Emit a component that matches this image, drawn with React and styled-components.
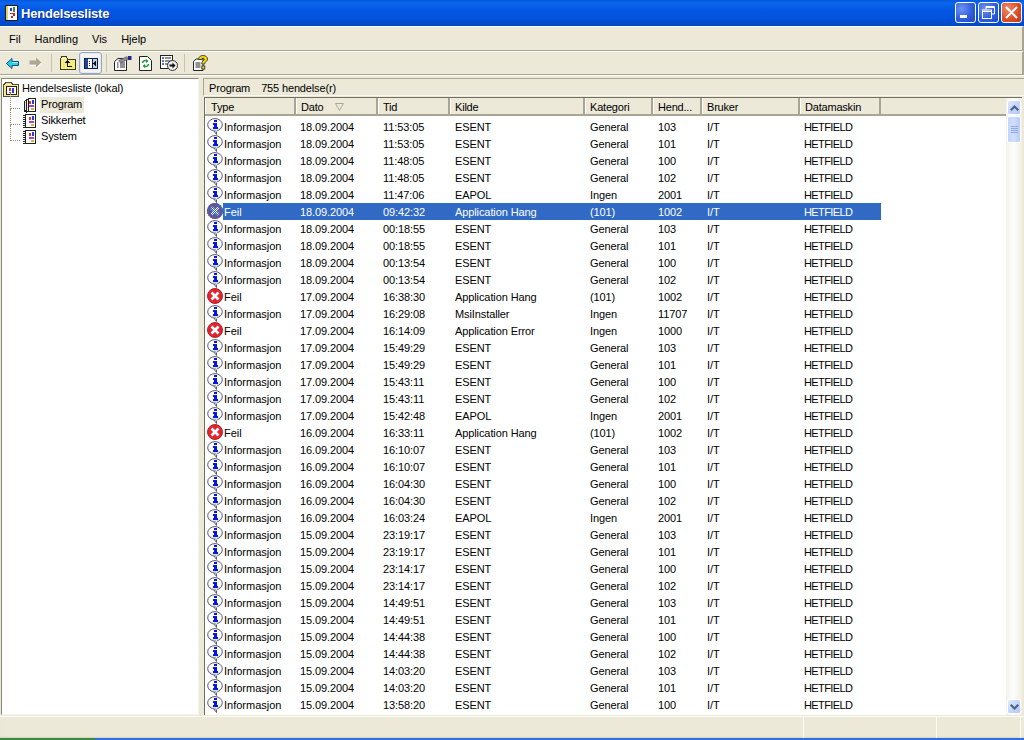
import React from 'react';
import styled, { createGlobalStyle } from 'styled-components';

const GlobalStyle = createGlobalStyle`
    html, body {
        margin: 0;
        padding: 0;
        background: #ECE9D8;
    }
    * {
        box-sizing: border-box;
    }
`;

const COLUMNS = '91px 82px 72px 135px 68px 49px 98px 81px';

const headers = ['Type', 'Dato', 'Tid', 'Kilde', 'Kategori', 'Hend...', 'Bruker', 'Datamaskin'];

const I = 'Informasjon';
const F = 'Feil';

// type, dato, tid, kilde, kategori, hendelse
const events = [
    [I, '18.09.2004', '11:53:05', 'ESENT', 'General', '103'],
    [I, '18.09.2004', '11:53:05', 'ESENT', 'General', '101'],
    [I, '18.09.2004', '11:48:05', 'ESENT', 'General', '100'],
    [I, '18.09.2004', '11:48:05', 'ESENT', 'General', '102'],
    [I, '18.09.2004', '11:47:06', 'EAPOL', 'Ingen', '2001'],
    [F, '18.09.2004', '09:42:32', 'Application Hang', '(101)', '1002'],
    [I, '18.09.2004', '00:18:55', 'ESENT', 'General', '103'],
    [I, '18.09.2004', '00:18:55', 'ESENT', 'General', '101'],
    [I, '18.09.2004', '00:13:54', 'ESENT', 'General', '100'],
    [I, '18.09.2004', '00:13:54', 'ESENT', 'General', '102'],
    [F, '17.09.2004', '16:38:30', 'Application Hang', '(101)', '1002'],
    [I, '17.09.2004', '16:29:08', 'MsiInstaller', 'Ingen', '11707'],
    [F, '17.09.2004', '16:14:09', 'Application Error', 'Ingen', '1000'],
    [I, '17.09.2004', '15:49:29', 'ESENT', 'General', '103'],
    [I, '17.09.2004', '15:49:29', 'ESENT', 'General', '101'],
    [I, '17.09.2004', '15:43:11', 'ESENT', 'General', '100'],
    [I, '17.09.2004', '15:43:11', 'ESENT', 'General', '102'],
    [I, '17.09.2004', '15:42:48', 'EAPOL', 'Ingen', '2001'],
    [F, '16.09.2004', '16:33:11', 'Application Hang', '(101)', '1002'],
    [I, '16.09.2004', '16:10:07', 'ESENT', 'General', '103'],
    [I, '16.09.2004', '16:10:07', 'ESENT', 'General', '101'],
    [I, '16.09.2004', '16:04:30', 'ESENT', 'General', '100'],
    [I, '16.09.2004', '16:04:30', 'ESENT', 'General', '102'],
    [I, '16.09.2004', '16:03:24', 'EAPOL', 'Ingen', '2001'],
    [I, '15.09.2004', '23:19:17', 'ESENT', 'General', '103'],
    [I, '15.09.2004', '23:19:17', 'ESENT', 'General', '101'],
    [I, '15.09.2004', '23:14:17', 'ESENT', 'General', '100'],
    [I, '15.09.2004', '23:14:17', 'ESENT', 'General', '102'],
    [I, '15.09.2004', '14:49:51', 'ESENT', 'General', '103'],
    [I, '15.09.2004', '14:49:51', 'ESENT', 'General', '101'],
    [I, '15.09.2004', '14:44:38', 'ESENT', 'General', '100'],
    [I, '15.09.2004', '14:44:38', 'ESENT', 'General', '102'],
    [I, '15.09.2004', '14:03:20', 'ESENT', 'General', '103'],
    [I, '15.09.2004', '14:03:20', 'ESENT', 'General', '101'],
    [I, '15.09.2004', '13:58:20', 'ESENT', 'General', '100'],
];

function InfoIcon() {
    return (
        <svg width="16" height="17" viewBox="0 0 16 17">
            <path d="M6.500 12.500L9.500 16.500V12z" fill="#fff" stroke="#555a70" />
            <ellipse cx="8" cy="6.800" rx="7.300" ry="6.200" fill="#fff" stroke="#555a70" />
            <path d="M9.500 12v1.500" stroke="#fff" />
            <path d="M2.500 9.500C4 11.500 6 12 8 12s4-.5 5.500-2.500" fill="none" stroke="#c9ccdb" />
            <g shapeRendering="crispEdges">
                <rect x="7" y="2" width="3" height="2" fill="#0618e0" />
                <path d="M6 5h4v4h1v2H6V9h1V6.500H6z" fill="#0618e0" />
            </g>
        </svg>
    );
}

function ErrorIcon({ selected }) {
    return (
        <svg width="16" height="16" viewBox="0 0 16 16">
            <defs>
                <pattern id="dither" width="2" height="2" patternUnits="userSpaceOnUse">
                    <rect width="2" height="1" fill="#316AC5" />
                    <rect x="1" y="1" width="1" height="1" fill="#316AC5" />
                </pattern>
                <pattern id="ditherCross" width="2" height="2" patternUnits="userSpaceOnUse">
                    <rect width="2" height="2" fill="#316AC5" />
                    <rect width="1" height="1" fill="#fff" />
                    <rect x="1" y="1" width="1" height="1" fill="#fff" />
                </pattern>
            </defs>
            <circle cx="8" cy="8" r="7.500" fill="#e3232d" stroke="#b0242c" />
            {selected && <circle cx="8" cy="8" r="8" fill="url(#dither)" />}
            <path d="M4.500 4.500l7 7M11.500 4.500l-7 7" stroke={selected ? 'url(#ditherCross)' : '#fff'} strokeWidth="2.600" />
        </svg>
    );
}

// notatblokk med spiral, brukt for loggene i treet
function LogIcon({ open }) {
    return (
        <svg width="14" height="16" viewBox="0 0 14 16" shapeRendering="crispEdges">
            {open ? (
                <>
                    <path d="M3.500 2.500L1 5v10l3-2" fill="#e4e4e4" stroke="#222" />
                    <path d="M5.500 1.500L3.500 3v12l2-1" fill="#f4f4f4" stroke="#222" />
                </>
            ) : (
                <path d="M0 2h2v1H0zM0 4h2v1H0zM0 6h2v1H0zM0 8h2v1H0zM0 10h2v1H0zM0 12h2v1H0zM0 14h2v1H0z" fill="#222" />
            )}
            <rect x={open ? 5.500 : 2.500} y="1.500" width={open ? 7 : 10} height="13" fill="#fff" stroke="#222" />
            <rect x="6" y="4" width="2" height="3" fill="#d9342f" />
            <rect x="9" y="3" width="2" height="4" fill="#2c3bd0" />
            <rect x="6" y="8" width="5" height="2" fill="#b13fb5" />
            <rect x="8" y="11" width="3" height="2" fill="#d7b52c" />
        </svg>
    );
}

function TitleDoc() {
    return (
        <svg width="13" height="16" viewBox="0 0 13 16" shapeRendering="crispEdges">
            <rect x=".5" y=".5" width="12" height="15" fill="#fff" stroke="#1c1c1c" />
            <rect x="1" y="1" width="2" height="14" fill="#e7cf6b" />
            <rect x="5" y="3" width="2" height="3" fill="#2c3bd0" />
            <rect x="8" y="2" width="2" height="5" fill="#3d8f3d" />
            <path d="M5 8h5v3H8v2H6v-2h2V9H5z" fill="#c62c2c" />
        </svg>
    );
}

function RootIcon() {
    return (
        <svg width="16" height="16" viewBox="0 0 16 16" shapeRendering="crispEdges">
            <path d="M.5 3.500h1l1-2h6l1 2h6v12H.5z" fill="#f6e98c" stroke="#4f4f40" />
            <rect x="3.500" y="5.500" width="10" height="8" fill="#fff" stroke="#222" />
            <rect x="6" y="7" width="2" height="3" fill="#d9342f" />
            <rect x="9" y="7" width="2" height="5" fill="#2c3bd0" />
            <rect x="6" y="11" width="2" height="1" fill="#b13fb5" />
        </svg>
    );
}

function BackIcon() {
    return (
        <svg width="13" height="11" viewBox="0 0 13 11">
            <path d="M6 .5v3h6.500v4H6v3L.5 5.500z" fill="#25d3e8" stroke="#0b4f7c" />
            <path d="M6 4.500h6" stroke="#a9f3fa" />
        </svg>
    );
}

function ForwardIcon() {
    return (
        <svg width="13" height="12" viewBox="0 0 13 12">
            <path d="M7 .5v3H.500v4H7v3l5.500-5z" fill="#a9a796" />
            <path d="M1 8.500h6M7.500 11l5-5" stroke="#fff" />
        </svg>
    );
}

function UpIcon() {
    return (
        <svg width="16" height="14" viewBox="0 0 16 14" shapeRendering="crispEdges">
            <path d="M.5 3.500l1-3h5l1 3h8v10H.5z" fill="#f5ea7e" stroke="#3c3a20" />
            <path d="M1 2.500h5" stroke="#fff" />
            <path d="M4 7l3-3 3 3H8v3h4v1H7V7z" fill="#111" />
        </svg>
    );
}

function ToggleIcon() {
    return (
        <svg width="14" height="11" viewBox="0 0 14 11" shapeRendering="crispEdges">
            <rect x=".5" y=".5" width="13" height="10" fill="#fff" stroke="#0b1f5c" />
            <rect x="1" y="1" width="3" height="9" fill="#26458f" />
            <path d="M5 3h1v1H5zM5 5h1v1H5zM5 7h1v1H5z" fill="#0b1f5c" />
            <rect x="8" y="1" width="1" height="9" fill="#0b1f5c" />
            <rect x="9" y="1" width="4" height="9" fill="#c9cedd" />
            <path d="M12 2.500v6L9 5.500z" fill="#111" />
        </svg>
    );
}

function PropsIcon() {
    return (
        <svg width="18" height="16" viewBox="0 0 18 16">
            <path d="M.5 6.500L4 3.500h8.500v12H.5z" fill="#fff" stroke="#222" />
            <path d="M3 8h1.500M6 8h5M3 10h1.500M6 10h5M3 12h1.500M6 12h5" stroke="#222" />
            <path d="M4.500 5.500l8.500-4 1.200 3-7.700 3.500z" fill="#8b8b95" stroke="#444" strokeWidth=".5" />
            <rect x="14" y="1" width="3.500" height="4" fill="#1b2a8c" />
        </svg>
    );
}

function RefreshIcon() {
    return (
        <svg width="13" height="15" viewBox="0 0 13 15">
            <path d="M.5.500h8l4 4v10H.5z" fill="#fff" stroke="#222" />
            <path d="M3.500 7c.3-2 2.300-3 4.300-2.200" fill="none" stroke="#159a2e" strokeWidth="1.600" />
            <path d="M7 3l2.500 2L7 7z" fill="#159a2e" />
            <path d="M9.500 8c-.3 2-2.300 3-4.300 2.200" fill="none" stroke="#159a2e" strokeWidth="1.600" />
            <path d="M6 8L3.500 10 6 12z" fill="#159a2e" />
        </svg>
    );
}

function ExportIcon() {
    return (
        <svg width="18" height="16" viewBox="0 0 18 16">
            <rect x=".5" y=".5" width="12" height="13" fill="#fff" stroke="#222" />
            <path d="M2 3h2M2 6h2M2 9h2" stroke="#2d3cc9" strokeWidth="1.500" />
            <path d="M5 3h6M5 6h6M5 9h4" stroke="#222" />
            <circle cx="12.500" cy="10.500" r="5" fill="#eee" stroke="#333" />
            <path d="M9.500 9.500h3V7.500l3 3-3 3v-2h-3z" fill="#111" />
        </svg>
    );
}

function HelpIcon() {
    return (
        <svg width="15" height="16" viewBox="0 0 15 16">
            <path d="M.5 6.500L3 4h7v11.500H.5z" fill="#fff" stroke="#222" />
            <path d="M2.500 8h5M2.500 10h5M2.500 12h5" stroke="#222" />
            <path d="M5.500 4.500C5.500 2 7.500.5 10 .5s4.500 1.300 4.500 3.500c0 2-1.500 2.600-2.300 3.300-.5.500-.5 1-.5 1.700H8.800c0-1.500.2-2.200 1.100-3 .7-.6 1.400-1 1.400-1.800 0-.7-.5-1.100-1.300-1.100-.9 0-1.300.6-1.400 1.400z" fill="#f7dc0c" stroke="#222" strokeWidth=".8" />
            <rect x="8.800" y="11" width="3" height="3" fill="#f7dc0c" stroke="#222" strokeWidth=".8" />
        </svg>
    );
}

function SortIcon() {
    return (
        <svg width="9" height="8" viewBox="0 0 9 8">
            <path d="M.5.500h8L4.500 7.500z" fill="#ECE9D8" stroke="#aca899" />
        </svg>
    );
}

function App() {
    return (
        <Desktop>
            <GlobalStyle />
            <TitleBar>
                <TitleIcon><TitleDoc /></TitleIcon>
                <TitleText>Hendelsesliste</TitleText>
                <WindowButtons>
                    <WindowButton>
                        <svg width="21" height="21" viewBox="0 0 21 21"><rect x="5" y="13" width="7" height="3" fill="#fff" /></svg>
                    </WindowButton>
                    <WindowButton>
                        <svg width="21" height="21" viewBox="0 0 21 21" fill="none" stroke="#fff">
                            <path d="M8 7.500V4.500h8.500V12H13.500" />
                            <path d="M8 5.500h8.500" />
                            <rect x="4.500" y="8" width="9" height="8.500" />
                            <path d="M4.500 9.500h9" />
                        </svg>
                    </WindowButton>
                    <WindowButton $close>
                        <svg width="21" height="21" viewBox="0 0 21 21"><path d="M5 5l11 11M16 5L5 16" stroke="#fff" strokeWidth="2" /></svg>
                    </WindowButton>
                </WindowButtons>
            </TitleBar>
            <MenuBar>
                <MenuItem>Fil</MenuItem>
                <MenuItem>Handling</MenuItem>
                <MenuItem>Vis</MenuItem>
                <MenuItem>Hjelp</MenuItem>
            </MenuBar>
            <ToolBar>
                <ToolButton><BackIcon /></ToolButton>
                <ToolButton><ForwardIcon /></ToolButton>
                <ToolSeparator />
                <ToolButton><UpIcon /></ToolButton>
                <ToolButton $active><ToggleIcon /></ToolButton>
                <ToolSeparator />
                <ToolButton><PropsIcon /></ToolButton>
                <ToolButton><RefreshIcon /></ToolButton>
                <ToolButton><ExportIcon /></ToolButton>
                <ToolSeparator />
                <ToolButton><HelpIcon /></ToolButton>
            </ToolBar>
            <Workspace>
                <TreePane>
                    <TreeRoot>
                        <RootIcon />
                        <TreeLabel>Hendelsesliste (lokal)</TreeLabel>
                    </TreeRoot>
                    <TreeRow>
                        <Connector />
                        <LogIcon open />
                        <TreeLabel $selected>Program</TreeLabel>
                    </TreeRow>
                    <TreeRow>
                        <Connector />
                        <LogIcon />
                        <TreeLabel>Sikkerhet</TreeLabel>
                    </TreeRow>
                    <TreeRow>
                        <Connector />
                        <LogIcon />
                        <TreeLabel>System</TreeLabel>
                    </TreeRow>
                </TreePane>
                <ListArea>
                    <ListCaption>
                        <span>Program</span>
                        <span>755 hendelse(r)</span>
                    </ListCaption>
                    <ListFrame>
                        <ListMain>
                            <HeaderRow>
                                {headers.map((h) => (
                                    <HeaderCell key={h}>
                                        {h}
                                        {h === 'Dato' && <SortMark><SortIcon /></SortMark>}
                                    </HeaderCell>
                                ))}
                            </HeaderRow>
                            <Rows>
                                {events.map((ev, i) => {
                                    const selected = i === 5;
                                    return (
                                        <Row key={i}>
                                            <TypeCell>
                                                <IconSlot>
                                                    {ev[0] === F ? <ErrorIcon selected={selected} /> : <InfoIcon />}
                                                </IconSlot>
                                                <TypeLabel $selected={selected}>{ev[0]}</TypeLabel>
                                            </TypeCell>
                                            {[ev[1], ev[2], ev[3], ev[4], ev[5], 'I/T', 'HETFIELD'].map((v, j) => (
                                                <Cell key={j} $selected={selected}>{v}</Cell>
                                            ))}
                                        </Row>
                                    );
                                })}
                            </Rows>
                        </ListMain>
                        <ScrollBar>
                            <ScrollButton>
                                <svg width="9" height="6" viewBox="0 0 9 6"><path d="M0 4.500L4.500 0 9 4.500 7.500 6l-3-3-3 3z" fill="#4d6185" /></svg>
                            </ScrollButton>
                            <ScrollThumb>
                                <svg width="7" height="8" viewBox="0 0 7 8"><path d="M0 .5h7M0 2.500h7M0 4.500h7M0 6.500h7" stroke="#8fa9e6" /></svg>
                            </ScrollThumb>
                            <ScrollSpace />
                            <ScrollButton>
                                <svg width="9" height="6" viewBox="0 0 9 6"><path d="M0 1.500L4.500 6 9 1.500 7.500 0l-3 3-3-3z" fill="#4d6185" /></svg>
                            </ScrollButton>
                        </ScrollBar>
                    </ListFrame>
                </ListArea>
            </Workspace>
            <StatusBar>
                <StatusCell $grow />
                <StatusCell $width={133} />
                <StatusCell $width={84} />
            </StatusBar>
            <TaskStrip>
                <StartEdge />
                <TaskEdge />
            </TaskStrip>
        </Desktop>
    );
}

const Desktop = styled.div`
    width: 1024px;
    height: 740px;
    overflow: hidden;
    display: flex;
    flex-direction: column;
    background: #ECE9D8;
    font-family: "Liberation Sans", Arial, sans-serif;
    font-size: 11px;
    color: #000;
`;

const TitleBar = styled.div`
    height: 26px;
    flex: none;
    display: flex;
    align-items: center;
    padding: 0 2px 0 5px;
    background: linear-gradient(180deg, #0458d8 0%, #0a66f0 12%, #0558e4 35%, #0252dc 70%, #0147c4 100%);
`;

const TitleIcon = styled.div`
    width: 13px;
    height: 16px;
    margin-right: 3px;
    svg {
        display: block;
    }
`;

const TitleText = styled.div`
    flex: 1;
    color: #fff;
    font-family: "Liberation Sans", Arial, sans-serif;
    font-weight: 700;
    font-size: 13px;
    letter-spacing: -0.2px;
    text-shadow: 1px 1px 0 #0a2c8c;
`;

const WindowButtons = styled.div`
    display: flex;
    gap: 2px;
    margin-top: -1px;
`;

const WindowButton = styled.div`
    width: 21px;
    height: 21px;
    border: 1px solid #fff;
    border-radius: 3px;
    display: flex;
    align-items: center;
    justify-content: center;
    svg {
        margin: -1px;
        flex: none;
    }
    background: ${(p) => p.$close
        ? 'radial-gradient(circle at 30% 30%, #ee8a6c 0%, #dd4f27 55%, #c43a14 100%)'
        : 'radial-gradient(circle at 30% 30%, #6f93ef 0%, #2f5edc 55%, #2048c8 100%)'};
`;

const MenuBar = styled.div`
    height: 25px;
    flex: none;
    display: flex;
    align-items: center;
    padding-left: 2px;
    border-top: 1px solid #fff;
    border-bottom: 1px solid #a8a595;
    border-right: 2px solid #a8a595;
`;

const MenuItem = styled.div`
    padding: 0 7px;
    font-size: 11px;
`;

const ToolBar = styled.div`
    height: 24px;
    flex: none;
    display: flex;
    align-items: center;
    padding-left: 1px;
    border-top: 1px solid #fff;
    border-bottom: 1px solid #a8a595;
    border-right: 2px solid #a8a595;
`;

const ToolButton = styled.div`
    width: 23px;
    height: 22px;
    display: flex;
    align-items: center;
    justify-content: center;
    border-radius: 3px;
    ${(p) => p.$active && `
        background: #f4f3ee;
        border: 1px solid #94a7c8;
        box-shadow: inset 0 0 0 1px #e3e9f4;
    `}
`;

const ToolSeparator = styled.div`
    width: 1px;
    height: 18px;
    margin: 0 4px;
    background: #c5c2b2;
`;

const Workspace = styled.div`
    flex: 1;
    min-height: 0;
    display: flex;
    padding: 2px 0 1px 1px;
    border-top: 1px solid #fff;
`;

const TreePane = styled.div`
    width: 198px;
    flex: none;
    background: #fff;
    border: 1px solid;
    border-color: #8a887a #f4f3ee #f4f3ee #8a887a;
    padding-top: 2px;
`;

const TreeRoot = styled.div`
    height: 16px;
    display: flex;
    align-items: center;
    gap: 2px;
    padding-left: 1px;
`;

const TreeRow = styled.div`
    height: 16px;
    display: flex;
    align-items: center;
    gap: 3px;
    padding-left: 8px;
`;

const Connector = styled.div`
    width: 10px;
    height: 16px;
    margin-top: -8px;
    flex: none;
    border-left: 1px dotted #8f8f7a;
    border-bottom: 1px dotted #8f8f7a;
`;

const TreeLabel = styled.div`
    height: 16px;
    line-height: 15px;
    padding: 0 2px 0 1px;
    letter-spacing: -0.15px;
    background: ${(p) => (p.$selected ? '#ECE9D8' : 'transparent')};
`;

const ListArea = styled.div`
    flex: 1;
    min-width: 0;
    margin-left: 4px;
    display: flex;
    flex-direction: column;
`;

const ListCaption = styled.div`
    height: 18px;
    flex: none;
    display: flex;
    align-items: center;
    gap: 11px;
    padding: 1px 0 0 5px;
    margin-bottom: 1px;
    letter-spacing: -0.15px;
    border-top: 1px solid #a8a595;
    border-left: 1px solid #a8a595;
    border-bottom: 1px solid #f7f6ef;
`;

const ListFrame = styled.div`
    flex: 1;
    min-height: 0;
    display: flex;
    background: #fff;
    border-top: 1px solid #716f64;
    border-left: 1px solid #716f64;
    margin: 0 2px 0 1px;
`;

const ListMain = styled.div`
    flex: 1;
    min-width: 0;
    display: flex;
    flex-direction: column;
`;

const HeaderRow = styled.div`
    height: 18px;
    flex: none;
    display: grid;
    grid-template-columns: ${COLUMNS} 1fr;
    background: #ECE9D8;
    border-bottom: 2px solid #a8a595;
    &::after {
        content: '';
    }
`;

const HeaderCell = styled.div`
    display: flex;
    align-items: center;
    padding: 2px 0 0 4px;
    letter-spacing: -0.2px;
    border-left: 1px solid #fff;
    border-right: 2px solid #a8a595;
    white-space: nowrap;
    overflow: hidden;
    &:first-child {
        padding-left: 5px;
    }
`;

const SortMark = styled.span`
    display: flex;
    margin-left: 12px;
`;

const Rows = styled.div`
    flex: 1;
    min-height: 0;
    overflow: hidden;
    padding-top: 2px;
`;

const Row = styled.div`
    height: 17px;
    display: grid;
    grid-template-columns: ${COLUMNS};
`;

const TypeCell = styled.div`
    display: flex;
    min-width: 0;
    height: 17px;
    padding-left: 2px;
`;

const IconSlot = styled.div`
    width: 16px;
    height: 17px;
    flex: none;
`;

const TypeLabel = styled.div`
    flex: 1;
    height: 17px;
    line-height: 19px;
    padding-left: 1px;
    overflow: hidden;
    background: ${(p) => (p.$selected ? '#316AC5' : 'transparent')};
    color: ${(p) => (p.$selected ? '#fff' : '#000')};
`;

const Cell = styled.div`
    height: 17px;
    line-height: 19px;
    padding-left: 5px;
    letter-spacing: -0.1px;
    white-space: nowrap;
    overflow: hidden;
    background: ${(p) => (p.$selected ? '#316AC5' : 'transparent')};
    color: ${(p) => (p.$selected ? '#fff' : '#000')};
    &:nth-child(2) {
        padding-left: 4px;
    }
    &:last-child {
        padding-left: 4px;
        letter-spacing: -0.6px;
    }
`;

const ScrollBar = styled.div`
    width: 16px;
    flex: none;
    display: flex;
    flex-direction: column;
    padding: 2px 0 1px;
    gap: 1px;
    background: linear-gradient(90deg, #f3f3ec 0%, #fdfdfb 50%, #f0efe6 100%);
`;

const ScrollButton = styled.div`
    height: 15px;
    flex: none;
    margin: 0 1px;
    display: flex;
    align-items: center;
    justify-content: center;
    border: 1px solid #fff;
    border-radius: 2px;
    background: linear-gradient(135deg, #e1eafe 0%, #c1d3fb 60%, #b4c8f6 100%);
`;

const ScrollThumb = styled.div`
    height: 27px;
    flex: none;
    margin: 0 1px;
    display: flex;
    align-items: center;
    justify-content: center;
    border: 1px solid #fff;
    border-radius: 2px;
    background: linear-gradient(90deg, #c5d5fb 0%, #d0defd 50%, #b9cbf8 100%);
`;

const ScrollSpace = styled.div`
    flex: 1;
`;

const StatusBar = styled.div`
    height: 22px;
    flex: none;
    display: flex;
    padding-right: 3px;
    border-top: 1px solid #fff;
    box-shadow: inset 0 -2px 2px -1px #d6d3c3;
`;

const StatusCell = styled.div`
    flex: ${(p) => (p.$grow ? '1' : 'none')};
    width: ${(p) => (p.$width ? `${p.$width}px` : 'auto')};
    border-right: 1px solid #fff;
`;

const TaskStrip = styled.div`
    height: 2px;
    flex: none;
    display: flex;
`;

const StartEdge = styled.div`
    width: 95px;
    background: #3a8a3c;
`;

const TaskEdge = styled.div`
    flex: 1;
    background: #2f6fe0;
`;

export default App;
